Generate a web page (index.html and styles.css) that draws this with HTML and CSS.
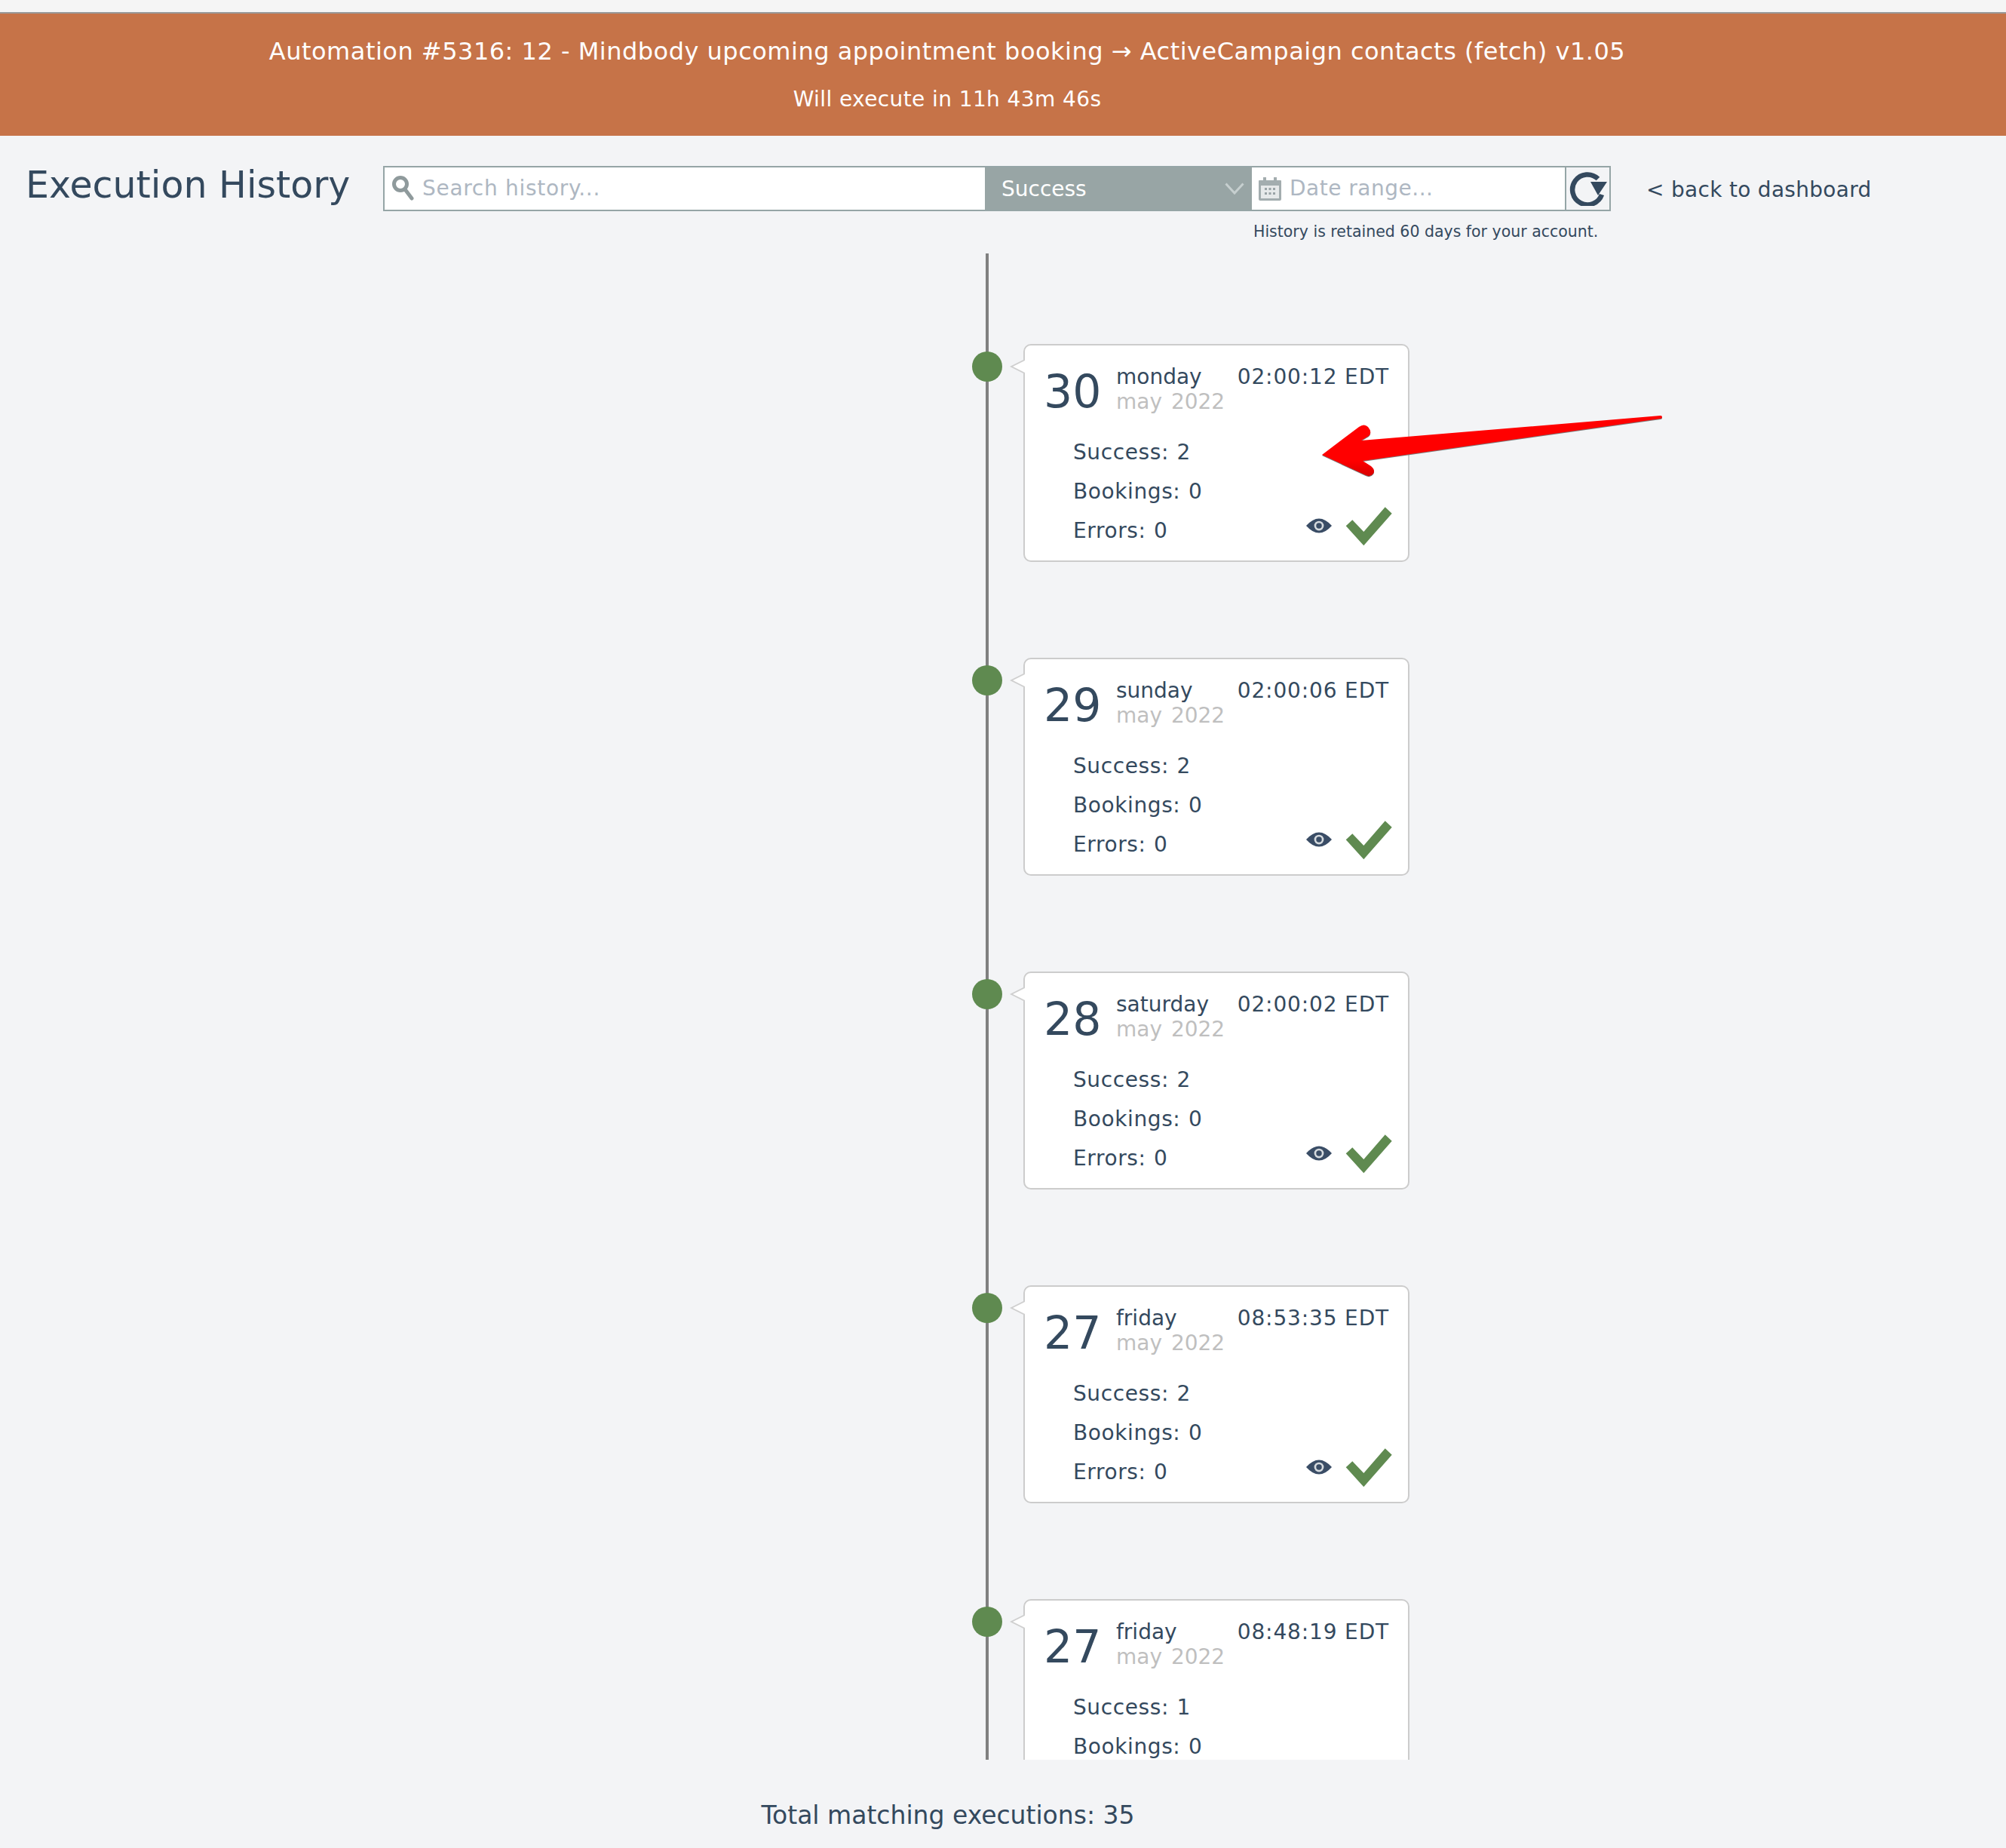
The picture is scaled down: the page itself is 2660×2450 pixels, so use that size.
FILE: index.html
```html
<!DOCTYPE html>
<html lang="en">
<head>
<meta charset="utf-8">
<title>Execution History</title>
<link rel="stylesheet" href="styles.css">
</head>
<body>
<div class="topstrip"></div>
<header class="banner">
  <div class="banner-title">Automation #5316: 12 - Mindbody upcoming appointment booking → ActiveCampaign contacts (fetch) v1.05</div>
  <div class="banner-sub">Will execute in 11h 43m 46s</div>
</header>
<section class="toolbar">
  <h1 class="page-title">Execution History</h1>
  <div class="filter-col">
    <div class="filters">
      <div class="field field-search">
        <svg class="icon-search" width="32" height="34" viewBox="0 0 32 34"><circle cx="12" cy="11" r="8.500" fill="none" stroke="#8f9a9c" stroke-width="5"/><path d="M18 18l9 12" stroke="#8f9a9c" stroke-width="5" stroke-linecap="round"/></svg>
        <span>Search history...</span>
      </div>
      <div class="select">
        <span>Success</span>
        <svg width="26" height="16" viewBox="0 0 26 16"><path d="M1.500 1.500L13 14L24.500 1.500" fill="none" stroke="#c6cfcf" stroke-width="3"/></svg>
      </div>
      <div class="field field-date">
        <svg class="icon-cal" width="32" height="32" viewBox="0 0 32 32"><path d="M2 5h5V1h4v4h10V1h4v4h5a1 1 0 0 1 1 1v24a2 2 0 0 1-2 2H3a2 2 0 0 1-2-2V6a1 1 0 0 1 1-1z" fill="#a3adaf"/><rect x="4" y="12" width="24" height="17" fill="#e6e9ea"/><path d="M9 15h3v3H9zM14.500 15h3v3h-3zM20 15h3v3h-3zM9 21h3v3H9zM14.500 21h3v3h-3zM20 21h3v3h-3z" fill="#99a3a6"/></svg>
        <span>Date range...</span>
      </div>
      <div class="refresh">
        <svg width="50" height="46" viewBox="0 0 50 46"><path d="M38 10A20 20 0 1 0 43 31" fill="none" stroke="#34495e" stroke-width="6.500"/><path d="M28 14h22l-12 18z" fill="#34495e"/></svg>
      </div>
    </div>
    <div class="note">History is retained 60 days for your account.</div>
  </div>
  <a class="back" href="#">&lt; back to dashboard</a>
</section>
<main class="timeline">
  <article class="entry">
    <span class="dot"></span>
    <div class="card">
      <div class="date-row"><div class="day">30</div><div class="date-info"><div class="weekday">monday</div><div class="month">may 2022</div></div><div class="time">02:00:12 EDT</div></div>
      <div class="stats"><div class="stat">Success: 2</div><div class="stat">Bookings: 0</div><div class="stat stat-last"><span>Errors: 0</span><span class="actions"><svg class="eye" width="34" height="20" viewBox="0 0 32 18"><path d="M0 9Q16 -9 32 9Q16 27 0 9z" fill="#3a4d66"/><circle cx="16" cy="9" r="6" fill="#d5dade"/><circle cx="16" cy="9" r="3.500" fill="#3a4d66"/></svg><svg class="check" width="62" height="52" viewBox="0 0 62 52"><path d="M0.700 25.300L9.300 17.300L24.300 33L52.700 0.300L61.700 8.700L24.300 51.300z" fill="#5f8a50"/></svg></span></div></div>
    </div>
  </article>
  <article class="entry">
    <span class="dot"></span>
    <div class="card">
      <div class="date-row"><div class="day">29</div><div class="date-info"><div class="weekday">sunday</div><div class="month">may 2022</div></div><div class="time">02:00:06 EDT</div></div>
      <div class="stats"><div class="stat">Success: 2</div><div class="stat">Bookings: 0</div><div class="stat stat-last"><span>Errors: 0</span><span class="actions"><svg class="eye" width="34" height="20" viewBox="0 0 32 18"><path d="M0 9Q16 -9 32 9Q16 27 0 9z" fill="#3a4d66"/><circle cx="16" cy="9" r="6" fill="#d5dade"/><circle cx="16" cy="9" r="3.500" fill="#3a4d66"/></svg><svg class="check" width="62" height="52" viewBox="0 0 62 52"><path d="M0.700 25.300L9.300 17.300L24.300 33L52.700 0.300L61.700 8.700L24.300 51.300z" fill="#5f8a50"/></svg></span></div></div>
    </div>
  </article>
  <article class="entry">
    <span class="dot"></span>
    <div class="card">
      <div class="date-row"><div class="day">28</div><div class="date-info"><div class="weekday">saturday</div><div class="month">may 2022</div></div><div class="time">02:00:02 EDT</div></div>
      <div class="stats"><div class="stat">Success: 2</div><div class="stat">Bookings: 0</div><div class="stat stat-last"><span>Errors: 0</span><span class="actions"><svg class="eye" width="34" height="20" viewBox="0 0 32 18"><path d="M0 9Q16 -9 32 9Q16 27 0 9z" fill="#3a4d66"/><circle cx="16" cy="9" r="6" fill="#d5dade"/><circle cx="16" cy="9" r="3.500" fill="#3a4d66"/></svg><svg class="check" width="62" height="52" viewBox="0 0 62 52"><path d="M0.700 25.300L9.300 17.300L24.300 33L52.700 0.300L61.700 8.700L24.300 51.300z" fill="#5f8a50"/></svg></span></div></div>
    </div>
  </article>
  <article class="entry">
    <span class="dot"></span>
    <div class="card">
      <div class="date-row"><div class="day">27</div><div class="date-info"><div class="weekday">friday</div><div class="month">may 2022</div></div><div class="time">08:53:35 EDT</div></div>
      <div class="stats"><div class="stat">Success: 2</div><div class="stat">Bookings: 0</div><div class="stat stat-last"><span>Errors: 0</span><span class="actions"><svg class="eye" width="34" height="20" viewBox="0 0 32 18"><path d="M0 9Q16 -9 32 9Q16 27 0 9z" fill="#3a4d66"/><circle cx="16" cy="9" r="6" fill="#d5dade"/><circle cx="16" cy="9" r="3.500" fill="#3a4d66"/></svg><svg class="check" width="62" height="52" viewBox="0 0 62 52"><path d="M0.700 25.300L9.300 17.300L24.300 33L52.700 0.300L61.700 8.700L24.300 51.300z" fill="#5f8a50"/></svg></span></div></div>
    </div>
  </article>
  <article class="entry">
    <span class="dot"></span>
    <div class="card">
      <div class="date-row"><div class="day">27</div><div class="date-info"><div class="weekday">friday</div><div class="month">may 2022</div></div><div class="time">08:48:19 EDT</div></div>
      <div class="stats"><div class="stat">Success: 1</div><div class="stat">Bookings: 0</div></div>
    </div>
  </article>
</main>
<footer class="total">Total matching executions: 35</footer>
<svg class="arrow" width="2660" height="700" viewBox="0 0 2660 700">
  <defs><linearGradient id="redfade" x1="0" y1="0" x2="0" y2="1"><stop offset="0" stop-color="#ff0000"/><stop offset="0.75" stop-color="#ff0000"/><stop offset="1" stop-color="#d80000"/></linearGradient></defs>
  <path d="M1753 603L1802 566Q1809 561 1814 566Q1820 573 1815 578L1805 584L2202 551Q2204 551 2204 553Q2204 555 2202 555L1807 611L1818 618Q1824 623 1821 628Q1817 633 1811 630z" fill="#7a7a7a" transform="translate(0 1)"/>
  <path d="M1753 603L1802 566Q1809 561 1814 566Q1820 573 1815 578L1805 584L2202 551Q2204 551 2204 553Q2204 555 2202 555L1807 611L1818 618Q1824 623 1821 628Q1817 633 1811 630z" fill="url(#redfade)"/>
</svg>
</body>
</html>
```

FILE: styles.css
```css
* { box-sizing: border-box; }
html, body { margin: 0; padding: 0; }
body {
  position: relative;
  height: 2450px;
  overflow: hidden;
  background: #f3f4f6;
  color: #34495e;
  font-family: "DejaVu Sans", Verdana, sans-serif;
  font-size: 28px;
}
.topstrip { height: 18px; background: #f5f5f5; border-bottom: 2px solid #999; }
.banner {
  height: 162px;
  padding: 22px 148px 0 0;
  background: #c67348;
  color: #fff;
  text-align: center;
}
.banner-title { line-height: 56px; font-size: 32px; letter-spacing: 0.5px; white-space: nowrap; }
.banner-sub { line-height: 56px; margin-top: 8px; font-size: 28px; letter-spacing: 0.4px; }

.toolbar { display: flex; align-items: flex-start; height: 156px; padding: 40px 0 0 34px; }
.page-title { margin: -4px 0 0 0; width: 474px; font-size: 49px; line-height: 60px; font-weight: 400; white-space: nowrap; }
.filter-col { width: 1628px; }
.filters { display: flex; height: 60px; border: 2px solid #95a5a6; }
.field { display: flex; align-items: center; background: #fff; color: #aeb7c2; line-height: 56px; }
.field-search { width: 796px; padding-left: 9px; gap: 9px; letter-spacing: 0.7px; }
.select {
  display: flex;
  align-items: center;
  justify-content: space-between;
  width: 354px;
  padding: 0 10px 0 22px;
  background: #98a5a5;
  color: #fff;
}
.field-date { width: 415px; padding-left: 8px; gap: 10px; letter-spacing: 0.5px; }
.refresh { flex: 1; display: flex; align-items: center; justify-content: center; border-left: 2px solid #95a5a6; background: #f3f4f6; }
.note { margin: 14px 0 0 1154px; font-size: 20.5px; line-height: 26px; white-space: nowrap; }
.back { margin: 2px 0 0 47px; line-height: 60px; color: #34495e; text-decoration: none; letter-spacing: 0.3px; }

.timeline {
  position: relative;
  height: 1997px;
  overflow: hidden;
  padding: 120px 0 0 1357px;
}
.timeline::before {
  content: "";
  position: absolute;
  left: 1307px;
  top: 0;
  bottom: 0;
  width: 4px;
  background: #808080;
}
.entry { position: relative; width: 512px; height: 289px; margin-bottom: 127px; }
.dot {
  position: absolute;
  left: -68px;
  top: 10px;
  width: 40px;
  height: 40px;
  border-radius: 50%;
  background: #5f8a50;
}
.entry::before,
.entry::after {
  content: "";
  position: absolute;
  width: 0;
  height: 0;
  border-style: solid;
  border-color: transparent;
  z-index: 1;
}
.entry::before {
  left: -18px;
  top: 20px;
  border-width: 10px 20px 10px 0;
  border-right-color: #cfcfcf;
}
.entry::after {
  left: -14px;
  top: 20px;
  border-width: 10px 20px 10px 0;
  border-right-color: #fff;
  z-index: 2;
}
.card {
  position: relative;
  height: 289px;
  padding: 25px 25px 0 25px;
  background: #fff;
  border: 2px solid #ccc;
  border-radius: 10px;
}
.date-row { display: flex; align-items: flex-start; height: 72px; }
.day { width: 96px; margin-top: 1px; font-size: 60px; line-height: 70px; }
.date-info { line-height: 33px; }
.month { color: #bfbfbf; word-spacing: 3px; }
.time { margin-left: auto; line-height: 33px; letter-spacing: 0.85px; white-space: nowrap; }
.stats { margin: 19px 0 0 39px; letter-spacing: 0.6px; word-spacing: 1px; }
.stat { height: 52px; line-height: 52px; }
.stat-last { display: flex; justify-content: space-between; }
.actions { display: flex; align-items: flex-start; gap: 18px; margin-right: -4px; }
.eye { margin-top: 9px; }
.check { margin-top: -6px; }

.total { margin-top: 44px; padding-right: 146px; text-align: center; font-size: 33px; line-height: 60px; }
.arrow { position: absolute; left: 0; top: 0; pointer-events: none; z-index: 3; }
```
